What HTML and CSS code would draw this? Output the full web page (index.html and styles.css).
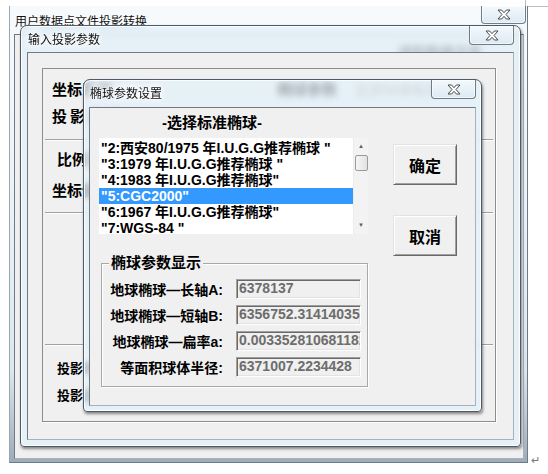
FILE: index.html
```html
<!DOCTYPE html>
<html lang="zh-CN">
<head>
    <meta charset="UTF-8">
    <title>椭球参数设置</title>
    <link rel="stylesheet" href="styles.css">
</head>
<body>
    <div class="doc-box"></div>

    <div class="win outer">
        <div class="caption">
            <span class="title">用户数据点文件投影转换</span>
            <span class="close"><svg width="14" height="11" viewBox="0 0 14 11"><polygon points="1,1 4.6,1 7,3.7 9.4,1 13,1 9,5.5 13,10 9.4,10 7,7.3 4.6,10 1,10 5,5.5"/></svg></span>
        </div>
        <div class="client outer-client">
            <div class="behind-text">读取数据文件</div>
        </div>
    </div>

    <div class="win glass inner">
        <div class="caption">
            <span class="title">输入投影参数</span>
            <span class="close"><svg width="14" height="11" viewBox="0 0 14 11"><polygon points="1,1 4.6,1 7,3.7 9.4,1 13,1 9,5.5 13,10 9.4,10 7,7.3 4.6,10 1,10 5,5.5"/></svg></span>
        </div>
        <div class="client inner-client">
            <div class="frame">
                <div class="row r1"><b class="lab-wide">坐标系统</b><b class="lab-mid">椭球参数</b><span class="lab-gray">北京54坐标系</span></div>
                <div class="row r2"><b class="spaced">投影方式</b></div>
                <div class="sep s1"></div>
                <div class="row r3"><b class="indent">比例系数</b></div>
                <div class="row r4"><b>坐标偏移</b></div>
                <div class="sep s2"></div>
                <div class="sep s3"></div>
                <div class="row r5"><b class="indent small">投影带号</b></div>
                <div class="row r6"><b class="indent small">投影高程</b></div>
            </div>
        </div>
    </div>

    <div class="win glass dlg">
        <div class="caption">
            <span class="title">椭球参数设置</span>
            <span class="close"><svg width="14" height="11" viewBox="0 0 14 11"><polygon points="1,1 4.6,1 7,3.7 9.4,1 13,1 9,5.5 13,10 9.4,10 7,7.3 4.6,10 1,10 5,5.5"/></svg></span>
        </div>
        <div class="client dlg-client">
            <div class="left-col">
                <div class="pick-title">-选择标准椭球-</div>
                <div class="listbox">
                    <ul class="items">
                        <li>"2:西安80/1975 年I.U.G.G推荐椭球 "</li>
                        <li>"3:1979 年I.U.G.G推荐椭球 "</li>
                        <li>"4:1983 年I.U.G.G推荐椭球"</li>
                        <li class="sel">"5:CGC2000"</li>
                        <li>"6:1967 年I.U.G.G推荐椭球"</li>
                        <li>"7:WGS-84 "</li>
                    </ul>
                    <div class="vscroll">
                        <span class="arrow">&#9650;</span>
                        <span class="thumb"></span>
                        <span class="track"></span>
                        <span class="arrow">&#9660;</span>
                    </div>
                </div>
                <fieldset class="group">
                    <legend>椭球参数显示</legend>
                    <div class="params">
                        <b>地球椭球—长轴A:</b><span class="field">6378137</span>
                        <b>地球椭球—短轴B:</b><span class="field">6356752.3141403558</span>
                        <b>地球椭球—扁率a:</b><span class="field">0.0033528106811823</span>
                        <b>等面积球体半径:</b><span class="field">6371007.2234428</span>
                    </div>
                </fieldset>
            </div>
            <div class="btn-col">
                <button class="btn">确定</button>
                <button class="btn">取消</button>
            </div>
        </div>
    </div>

    <span class="ret">&#8629;</span>
</body>
</html>
```

FILE: styles.css
```css
*{
    margin: 0;
    padding: 0;
    box-sizing: border-box;
}
body{
    width: 548px;
    height: 474px;
    overflow: hidden;
    position: relative;
    background-color: #fff;
    font-family: "Liberation Sans", "Noto Sans CJK SC", sans-serif;
    color: #000;
}
.doc-box{
    position: absolute;
    left: 525px;
    top: 0;
    width: 23px;
    height: 7px;
    border-left: 1px solid #bdbdbd;
    border-bottom: 1px solid #bdbdbd;
}

/* windows */
.win{
    position: absolute;
    display: flex;
    flex-direction: column;
}
.glass{
    background: rgba(226, 240, 250, 0.72);
    backdrop-filter: blur(3px);
    border: 1px solid #4e5a66;
    border-radius: 7px 7px 4px 4px;
    box-shadow: inset 0 0 0 1px rgba(255, 255, 255, 0.85), 1px 2px 3px rgba(0, 0, 0, 0.45);
}
.caption{
    display: flex;
    justify-content: space-between;
    align-items: flex-start;
}
.title{
    font-family: "Noto Sans CJK SC", sans-serif;
    font-size: 12px;
    line-height: 14px;
    color: #111;
    text-shadow: 0 0 4px #fff, 0 0 6px #fff, 0 0 8px #fff;
}
.close{
    width: 45px;
    height: 19px;
    display: flex;
    align-items: center;
    justify-content: center;
    border: 1px solid #6f7c88;
    border-top: none;
    border-radius: 0 0 4px 4px;
    background: linear-gradient(#f3f9fd, #dde9f2);
    box-shadow: inset 0 0 0 1px rgba(255, 255, 255, 0.6);
}
.close svg polygon{
    fill: #fff;
    stroke: #4a4a4a;
    stroke-width: 1;
    stroke-linejoin: round;
}
.client{
    flex: 1;
    background-color: #f0f0f0;
    border: 1px solid;
    border-color: #717a84 #a7b1bb #a7b1bb #717a84;
}

/* outer window */
.outer{
    left: 9px;
    top: 6px;
    width: 519px;
    height: 457px;
    padding: 0 3px 3px 4px;
    background: linear-gradient(180deg, #f6fafd 0%, #e9f2f8 45%, #dbe6ee 80%, #9eacb9 100%);
    border-left: 1px solid #9aa6b2;
    border-right: 1px solid #6d7a87;
    border-bottom: 1px solid #6d7a87;
}
.outer .caption{
    height: 28px;
    margin-right: -2px;
}
.outer .title{
    padding: 8px 0 0 1px;
}
.outer .close{
    height: 18px;
}
.behind-text{
    padding: 6px 0 0 383px;
    font-size: 14px;
    font-weight: bold;
    color: #333;
}

/* input window */
.inner{
    left: 20px;
    top: 25px;
    width: 501px;
    height: 422px;
    padding: 0 6px 6px 6px;
}
.inner .caption{
    height: 26px;
}
.inner .title{
    padding: 6px 0 0 1px;
}
.inner .close{
    margin-right: 0;
}
.inner-client{
    padding: 15px 17px 17px 14px;
}
.frame{
    height: 100%;
    border: 1px solid #8d8d8d;
    box-shadow: 1px 1px 0 #fff;
    padding: 11px 2px 0 9px;
    display: flex;
    flex-direction: column;
    font-size: 15px;
}
.row{
    height: 20px;
    line-height: 20px;
    display: flex;
    white-space: nowrap;
}
.lab-wide{
    width: 225px;
}
.lab-mid{
    width: 78px;
}
.lab-gray{
    color: #8a8a8a;
    font-size: 14px;
}
.spaced{
    letter-spacing: 3px;
}
.indent{
    margin-left: 5px;
}
.small{
    font-size: 13px;
}
.r2{ margin-top: 7px; }
.r3{ margin-top: 9px; }
.r4{ margin-top: 11px; }
.r5{ margin-top: 13px; }
.r6{ margin-top: 7px; }
.sep{
    height: 2px;
    margin-left: -7px;
    border-top: 1px solid #a0a0a0;
    border-bottom: 1px solid #fff;
}
.s1{ margin-top: 12px; }
.s2{ margin-top: 11px; }
.s3{ margin-top: 130px; }

/* ellipsoid dialog */
.dlg{
    left: 83px;
    top: 79px;
    width: 399px;
    height: 333px;
    padding: 0 5px 5px 5px;
}
.dlg .caption{
    height: 27px;
}
.dlg .title{
    padding: 6px 0 0 1px;
}
.dlg-client{
    display: flex;
    padding: 7px 0 0 9px;
}
.left-col{
    width: 269px;
}
.pick-title{
    height: 16px;
    line-height: 16px;
    padding-left: 63px;
    font-size: 15px;
    font-weight: bold;
}
.listbox{
    margin-top: 7px;
    height: 96px;
    display: flex;
    background-color: #fff;
}
.items{
    flex: 1;
    list-style: none;
    overflow: hidden;
    padding-top: 2px;
}
.items li{
    height: 16px;
    line-height: 16px;
    padding-left: 2px;
    font-size: 14px;
    font-weight: bold;
    white-space: pre;
}
.items li.sel{
    background-color: #3399ff;
    color: #fff;
}
.vscroll{
    width: 15px;
    display: flex;
    flex-direction: column;
    align-items: center;
    background-color: #f3f3f3;
    border-left: 1px solid #ececec;
}
.arrow{
    height: 17px;
    line-height: 17px;
    font-size: 6px;
    color: #606060;
}
.thumb{
    width: 13px;
    height: 16px;
    border: 1px solid #9b9b9b;
    border-radius: 2px;
    background: linear-gradient(90deg, #f5f5f5, #e2e2e2);
}
.track{
    flex: 1;
}
.group{
    margin: 21px 0 0 2px;
    width: 267px;
    height: 132px;
    border: 1px solid #a8a8a8;
    box-shadow: inset 1px 1px 0 #fff, 1px 1px 0 #fff;
    padding: 8px 0 0 4px;
}
.group legend{
    margin-left: 3px;
    padding: 0 2px;
    background-color: #f0f0f0;
    font-size: 15px;
    line-height: 16px;
    font-weight: bold;
}
.params{
    display: grid;
    grid-template-columns: 117px 125px;
    column-gap: 13px;
    row-gap: 6px;
    align-items: center;
}
.params b{
    font-size: 14px;
    text-align: right;
    white-space: nowrap;
}
.field{
    height: 20px;
    line-height: 17px;
    padding-left: 2px;
    overflow: hidden;
    white-space: nowrap;
    font-size: 14px;
    font-weight: bold;
    color: #6d6d6d;
    background-color: #f0f0f0;
    border: 1px solid;
    border-color: #a0a0a0 #fff #fff #a0a0a0;
    box-shadow: inset 1px 1px 0 #696969, inset -1px -1px 0 #e3e3e3;
}
.btn-col{
    display: flex;
    flex-direction: column;
    gap: 30px;
    margin: 29px 0 0 25px;
}
.btn{
    width: 64px;
    height: 41px;
    font-family: "Noto Sans CJK SC", sans-serif;
    font-size: 16px;
    font-weight: bold;
    color: #000;
    background-color: #f0f0f0;
    border: 1px solid;
    border-color: #e3e3e3 #696969 #696969 #e3e3e3;
    box-shadow: inset 1px 1px 0 #fff, inset -1px -1px 0 #a0a0a0;
}
.ret{
    position: absolute;
    left: 531px;
    top: 454px;
    font-size: 11px;
    color: #777;
}
```
